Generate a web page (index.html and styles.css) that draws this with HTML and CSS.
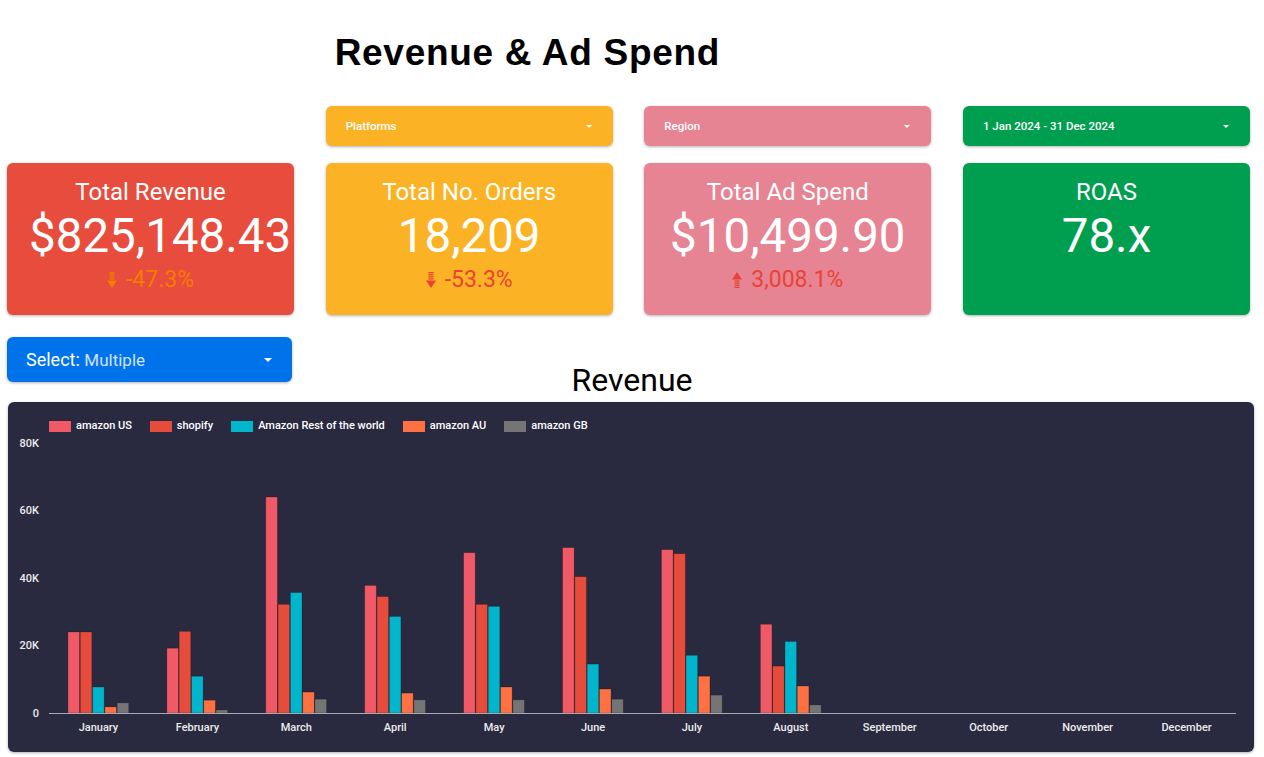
FILE: index.html
```html
<html>

<head>
    <link rel="stylesheet" href="styles.css">
</head>

<body>

    <div class="dashboard">
        <div class="row header-row">
            <h1 class="page-title">Revenue &amp; Ad Spend</h1>
        </div>

        <div class="row filter-row">
            <div class="filter yellow first"><span>Platforms</span><span class="caret"></span></div>
            <div class="filter pink"><span>Region</span><span class="caret"></span></div>
            <div class="filter green"><span>1 Jan 2024 - 31 Dec 2024</span><span class="caret"></span></div>
        </div>

        <div class="row kpi-row">
            <div class="card red">
                <div class="card-title">Total Revenue</div>
                <div class="card-value">$825,148.43</div>
                <div class="card-delta orange-text">
                    <svg class="arrow" viewBox="0 0 10 16">
                        <rect x="2.5" y="0" width="5" height="1.3" />
                        <rect x="2.5" y="2.1" width="5" height="1.3" />
                        <rect x="2.5" y="4.2" width="5" height="1.3" />
                        <rect x="2.5" y="6.3" width="5" height="1.3" />
                        <polygon points="0,8.4 10,8.4 5,16" />
                    </svg>
                    <span>-47.3%</span>
                </div>
            </div>
            <div class="card yellow">
                <div class="card-title">Total No. Orders</div>
                <div class="card-value">18,209</div>
                <div class="card-delta red-text">
                    <svg class="arrow" viewBox="0 0 10 16">
                        <rect x="2.5" y="0" width="5" height="1.3" />
                        <rect x="2.5" y="2.1" width="5" height="1.3" />
                        <rect x="2.5" y="4.2" width="5" height="1.3" />
                        <rect x="2.5" y="6.3" width="5" height="1.3" />
                        <polygon points="0,8.4 10,8.4 5,16" />
                    </svg>
                    <span>-53.3%</span>
                </div>
            </div>
            <div class="card pink">
                <div class="card-title">Total Ad Spend</div>
                <div class="card-value">$10,499.90</div>
                <div class="card-delta red-text">
                    <svg class="arrow" viewBox="0 0 10 16">
                        <polygon points="5,0 10,7.6 0,7.6" />
                        <rect x="2.5" y="8.4" width="5" height="1.3" />
                        <rect x="2.5" y="10.5" width="5" height="1.3" />
                        <rect x="2.5" y="12.6" width="5" height="1.3" />
                        <rect x="2.5" y="14.7" width="5" height="1.3" />
                    </svg>
                    <span>3,008.1%</span>
                </div>
            </div>
            <div class="card green">
                <div class="card-title">ROAS</div>
                <div class="card-value">78.x</div>
            </div>
        </div>

        <div class="select-row">
            <div class="select-box">
                <span class="select-label">Select:</span>&nbsp;<span class="select-value">Multiple</span>
                <span class="caret big"></span>
            </div>
            <h2 class="chart-title">Revenue</h2>
            <div></div>
        </div>

        <div class="chart-panel">
            <div class="legend">
                <div class="legend-item"><span class="swatch" style="background:#f05a67"></span>amazon US</div>
                <div class="legend-item"><span class="swatch" style="background:#e64c3b"></span>shopify</div>
                <div class="legend-item"><span class="swatch" style="background:#00b5cc"></span>Amazon Rest of the world</div>
                <div class="legend-item"><span class="swatch" style="background:#ff7043"></span>amazon AU</div>
                <div class="legend-item"><span class="swatch" style="background:#757575"></span>amazon GB</div>
            </div>
            <svg id="plot" class="plot" width="1246" height="320"></svg>
        </div>
    </div>

    <script>
        const months = ["January", "February", "March", "April", "May", "June", "July",
            "August", "September", "October", "November", "December"];

        // values in thousands
        const series = [
            { color: "#f05a67", values: [24, 19.2, 64, 37.8, 47.5, 49, 48.4, 26.3, 0, 0, 0, 0] },
            { color: "#e64c3b", values: [24, 24.2, 32.2, 34.5, 32.2, 40.4, 47.2, 13.9, 0, 0, 0, 0] },
            { color: "#00b5cc", values: [7.7, 10.9, 35.7, 28.6, 31.6, 14.5, 17.1, 21.2, 0, 0, 0, 0] },
            { color: "#ff7043", values: [1.8, 3.8, 6.2, 5.9, 7.7, 7.1, 10.9, 8.0, 0, 0, 0, 0] },
            { color: "#757575", values: [3.0, 0.9, 4.1, 3.9, 3.9, 4.1, 5.3, 2.4, 0, 0, 0, 0] }
        ];

        const plot = document.getElementById("plot");
        const NS = "http://www.w3.org/2000/svg";
        const left = 41;
        const right = 1228;
        const zeroY = 281;
        const perK = 3.375;
        const band = (right - left) / months.length;

        function add(tag, attrs, text) {
            let node = document.createElementNS(NS, tag);
            for (let key in attrs) {
                node.setAttribute(key, attrs[key]);
            }
            if (text) {
                node.textContent = text;
            }
            plot.appendChild(node);
            return node;
        }

        [0, 20, 40, 60, 80].forEach(function (v) {
            add("text", { x: 31, y: zeroY - v * perK, class: "axis-label", "text-anchor": "end" }, v ? v + "K" : "0");
        });

        months.forEach(function (month, i) {
            let cx = left + band * (i + 0.5);
            series.forEach(function (s, j) {
                let v = s.values[i];
                if (v > 0) {
                    let h = v * perK;
                    add("rect", {
                        x: cx - 30.5 + j * 12.3, y: zeroY - h, width: 11.6, height: h,
                        fill: s.color, class: "bar"
                    });
                }
            });
            add("text", { x: cx, y: 295, class: "axis-label", "text-anchor": "middle" }, month);
        });

        add("line", { x1: left, x2: right, y1: zeroY + 0.5, y2: zeroY + 0.5, class: "axis-line" });
    </script>
</body>

</html>
```

FILE: styles.css
```css
body {
    margin: 0;
    font-family: Roboto, "Liberation Sans", sans-serif;
    background-color: #fff;
    color: #000;
}

.row {
    display: grid;
    grid-template-columns: repeat(4, 287px);
    column-gap: 31.67px;
    padding-left: 7px;
}

.page-title {
    grid-column: 2 / 4;
    margin: 32px 0 0 0;
    padding-left: 9px;
    font-family: "Liberation Sans", Arial, sans-serif;
    font-size: 37px;
    line-height: 41px;
    font-weight: bold;
    letter-spacing: 0.7px;
}

.filter-row {
    margin-top: 33px;
}

.filter {
    height: 40px;
    border-radius: 6px;
    padding: 0 21px 0 20px;
    display: flex;
    align-items: center;
    justify-content: space-between;
    color: #fff;
    font-size: 11.5px;
    font-weight: 500;
    box-shadow: 0 1px 3px rgba(0, 0, 0, 0.3);
}

.filter.first {
    grid-column-start: 2;
}

.caret {
    width: 0;
    height: 0;
    border-left: 3px solid transparent;
    border-right: 3px solid transparent;
    border-top: 3px solid #fff;
}

.caret.big {
    margin-left: auto;
    border-left-width: 4px;
    border-right-width: 4px;
    border-top-width: 4px;
}

.yellow {
    background-color: #fbb325;
}

.pink {
    background-color: #e68494;
}

.green {
    background-color: #009e4f;
}

.red {
    background-color: #e74c3c;
}

.kpi-row {
    margin-top: 17px;
}

.card {
    height: 152px;
    box-sizing: border-box;
    border-radius: 6px;
    padding: 15px 22px 0 22px;
    text-align: center;
    color: #fff;
    white-space: nowrap;
    box-shadow: 0 1px 3px rgba(0, 0, 0, 0.3);
}

.card-title {
    font-size: 24px;
    line-height: 28px;
}

.card-value {
    margin-top: 2px;
    font-size: 47.5px;
    line-height: 56px;
}

.card-delta {
    margin-top: 3px;
    font-size: 23px;
    line-height: 26px;
    display: flex;
    justify-content: center;
    align-items: center;
    gap: 9px;
}

.arrow {
    width: 10px;
    height: 16px;
    fill: currentColor;
}

.orange-text {
    color: #f57c00;
}

.red-text {
    color: #ea4335;
}

.select-row {
    display: grid;
    grid-template-columns: 1fr auto 1fr;
    padding: 0 7px;
    margin-top: 22px;
}

.select-box {
    width: 285px;
    height: 45px;
    box-sizing: border-box;
    border-radius: 6px;
    padding: 0 20px 0 19px;
    display: flex;
    align-items: center;
    background-color: #0073ea;
    box-shadow: 0 1px 3px rgba(0, 0, 0, 0.3);
    color: #fff;
    font-size: 18px;
}

.select-value {
    font-size: 17px;
    color: #cfe1fb;
}

.chart-title {
    margin: 25px 0 0 0;
    font-size: 32px;
    line-height: 36px;
    font-weight: 400;
}

.chart-panel {
    margin: 4px 0 0 8px;
    width: 1246px;
    height: 350px;
    border-radius: 6px;
    background-color: #292a3f;
    box-shadow: 0 1px 3px rgba(0, 0, 0, 0.3);
}

.legend {
    display: flex;
    gap: 18px;
    padding: 18px 0 0 41px;
    height: 12px;
    color: #fff;
    font-size: 11px;
    font-weight: 500;
    line-height: 12px;
}

.legend-item {
    display: flex;
    align-items: center;
    gap: 5px;
}

.swatch {
    width: 22px;
    height: 11px;
}

.plot {
    display: block;
    overflow: visible;
}

.axis-label {
    fill: #ececec;
    font-size: 11px;
    font-weight: 500;
    dominant-baseline: central;
}

.bar {
    stroke: rgba(0, 0, 0, 0.25);
    stroke-width: 0.8;
}

.axis-line {
    stroke: #a8a8b0;
    stroke-width: 1;
}
```
